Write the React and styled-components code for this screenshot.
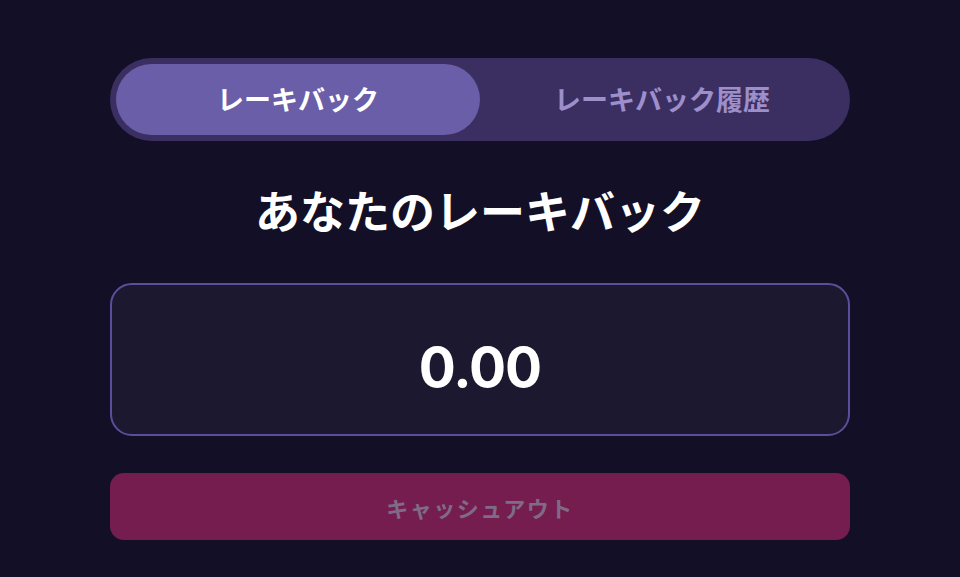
import React, { useState } from 'react';
import styled, { createGlobalStyle } from 'styled-components';

const GlobalStyle = createGlobalStyle`
  html, body {
    margin: 0;
    padding: 0;
    background: #130f26;
  }
  body {
    font-family: Inter, "Noto Sans CJK JP", sans-serif;
  }
`;

const Page = styled.div`
  width: 960px;
  height: 577px;
  background: #130f26;
  display: flex;
  justify-content: center;
  padding-top: 58px;
  box-sizing: border-box;
`;

const Panel = styled.div`
  width: 740px;
  display: flex;
  flex-direction: column;
  align-items: stretch;
`;

const Tabs = styled.div`
  height: 83px;
  border-radius: 42px;
  background: #3b2f62;
  padding: 6px;
  box-sizing: border-box;
  display: grid;
  grid-template-columns: 364px 1fr;
`;

const Tab = styled.button`
  border: none;
  border-radius: 36px;
  background: ${(p) => (p.active ? '#6a5ea8' : 'transparent')};
  color: ${(p) => (p.active ? '#ffffff' : '#9d8fcb')};
  font-family: "Noto Sans CJK JP", sans-serif;
  font-weight: 700;
  font-size: 27px;
  cursor: pointer;
  padding: 0 0 2px;
`;

const Title = styled.h2`
  margin: 40px 0 0;
  text-align: center;
  color: #ffffff;
  font-family: "Noto Sans CJK JP", sans-serif;
  font-weight: 700;
  font-size: 45px;
  line-height: 58px;
`;

const AmountBox = styled.div`
  margin-top: 44px;
  height: 153px;
  flex-shrink: 0;
  box-sizing: border-box;
  border: 2px solid #5b4f9a;
  border-radius: 22px;
  background: #1c1830;
  display: flex;
  align-items: center;
  justify-content: center;
  padding-top: 14px;
`;

const Amount = styled.span`
  color: #ffffff;
  font-family: Inter, sans-serif;
  font-weight: 700;
  font-size: 55px;
  letter-spacing: -1px;
`;

const CashoutButton = styled.button`
  margin-top: 37px;
  height: 67px;
  flex-shrink: 0;
  border: none;
  border-radius: 14px;
  background: #761d50;
  color: #7f6b88;
  font-family: "Noto Sans CJK JP", sans-serif;
  font-weight: 700;
  font-size: 22px;
  letter-spacing: 1.5px;
  cursor: not-allowed;
`;

export default function App() {
  const [tab, setTab] = useState(0);
  return (
    <>
      <GlobalStyle />
      <Page>
        <Panel>
          <Tabs>
            <Tab active={tab === 0} onClick={() => setTab(0)}>
              レーキバック
            </Tab>
            <Tab active={tab === 1} onClick={() => setTab(1)}>
              レーキバック履歴
            </Tab>
          </Tabs>
          <Title>あなたのレーキバック</Title>
          <AmountBox>
            <Amount>0.00</Amount>
          </AmountBox>
          <CashoutButton disabled>キャッシュアウト</CashoutButton>
        </Panel>
      </Page>
    </>
  );
}
